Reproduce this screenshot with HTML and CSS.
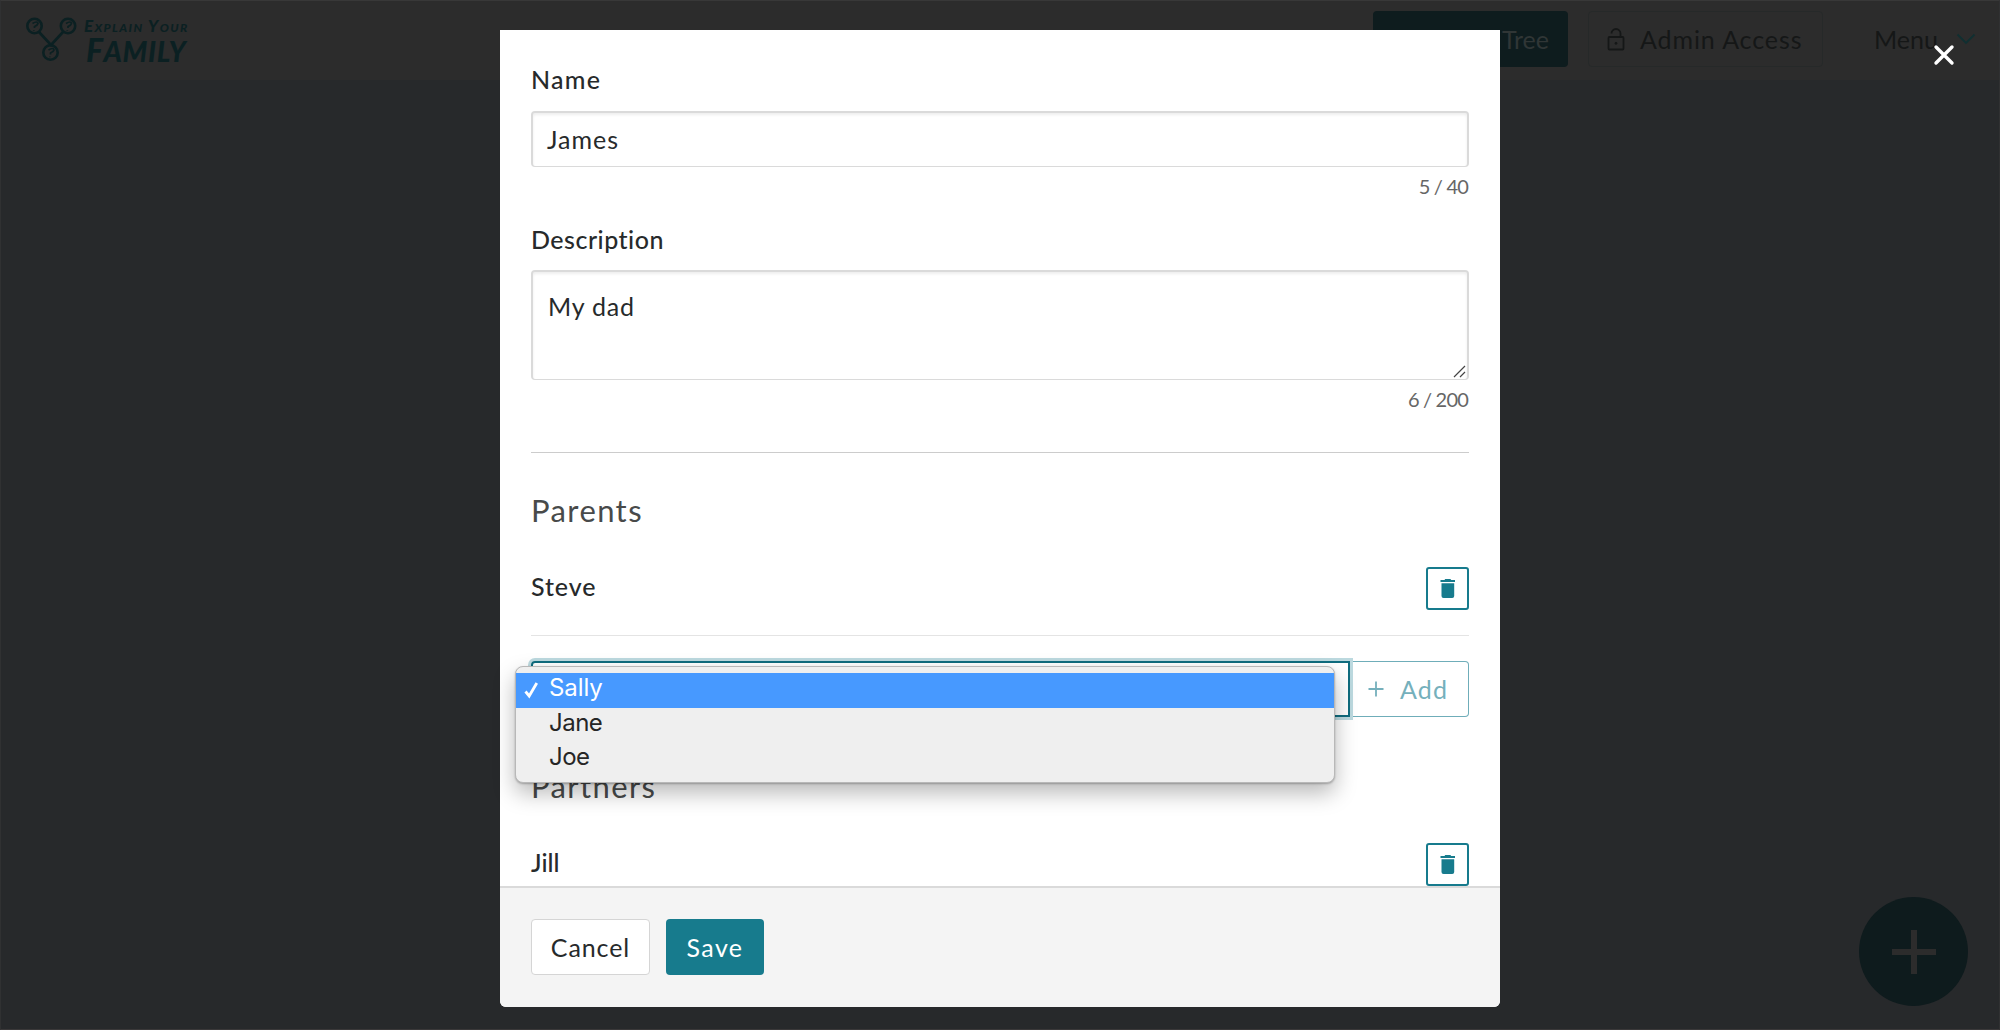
FILE: index.html
```html
<!DOCTYPE html>
<html lang="en">
<head>
<meta charset="utf-8">
<title>Explain Your Family</title>
<link rel="stylesheet" href="styles.css">
</head>
<body>
<div class="page">
  <header class="header">
    <div class="logo">
      <svg class="logo-mark" width="52" height="46" viewBox="0 0 52 46" fill="none" stroke="currentColor" stroke-width="2.6">
        <path d="M13 15 L25 28 L37 15"/>
        <circle cx="8.500" cy="9" r="7.2"/><circle cx="42" cy="9" r="7.2"/><circle cx="24.500" cy="35.500" r="7.2"/>
        <g stroke-width="1.7"><path d="M6.5 6.5q5-3 5.500 0q-.5 2-3.500 3v1.500M7.800 13v.8M40 6.500q5-3 5.500 0q-.5 2-3.500 3v1.500M41.300 13v.8M22.500 33q5-3 5.500 0q-.5 2-3.500 3v1.500M23.800 39.500v.8"/></g>
      </svg>
      <div class="logo-text"><span class="logo-top">Explain Your</span><span class="logo-bottom">Family</span></div>
    </div>
    <nav class="nav">
      <span class="nav-btn nav-tree">Tree</span>
      <span class="nav-btn nav-admin">
        <svg width="18" height="23" viewBox="0 0 18 23" fill="none" stroke="currentColor" stroke-width="1.8"><rect x="1.500" y="9" width="15" height="12.500" rx="1"/><path d="M4.500 5.500a4.500 4.500 0 0 1 9 0V9"/><circle cx="9" cy="15.300" r="1" fill="currentColor" stroke-width="1"/></svg>
        <span>Admin Access</span>
      </span>
      <span class="nav-menu"><span class="menu-word">Menu</span>
        <svg width="20" height="12" viewBox="0 0 20 12" fill="none" stroke="#102f31" stroke-width="1.800"><path d="M1.500 1.500 10 10l8.500-8.500"/></svg>
      </span>
    </nav>
  </header>
  <div class="fab"><svg width="44" height="44" viewBox="0 0 44 44" stroke="#2c2c2c" stroke-width="6"><path d="M22 0v44M0 22h44"/></svg></div>
</div>
<svg class="close" width="22" height="22" viewBox="0 0 22 22" stroke="#fff" stroke-width="3.400" stroke-linecap="round"><path d="M3 3 19 19M19 3 3 19"/></svg>

<main class="modal">
  <div class="modal-body">
    <label class="label label-name">Name</label>
    <div class="input"><span class="t-james">James</span></div>
    <div class="counter">5 / 40</div>
    <label class="label label-desc">Description</label>
    <div class="input textarea"><span class="t-dad">My dad</span>
      <svg class="grip" width="13" height="13" viewBox="0 0 13 13" stroke="#444" stroke-width="1.200"><path d="M1 12 12 1M7 12l5-5"/></svg>
    </div>
    <div class="counter counter-desc">6 / 200</div>
    <hr class="rule">
    <h2 class="heading">Parents</h2>
    <div class="person">
      <span class="person-name">Steve</span>
      <span class="trash"><svg width="16" height="20" viewBox="0 0 16 20" fill="currentColor"><path d="M5.200 0h5.200l.8.900H15v2H.500v-2h4zM1.500 4.200h12.700V17a2 2 0 0 1-2 2H3.500a2 2 0 0 1-2-2z"/></svg></span>
    </div>
    <hr class="rule rule-light">
    <div class="picker">
      <div class="select"></div>
      <div class="add"><svg width="16" height="16" viewBox="0 0 16 16" stroke="currentColor" stroke-width="1.800"><path d="M8 .5v15M.500 8h15"/></svg><span>Add</span></div>
      <div class="menu">
        <div class="option selected"><svg class="check" width="15" height="18" viewBox="0 0 15 18" fill="none" stroke="#fff" stroke-width="2.800"><path d="M1.500 10.500 5.200 15 12.800 2"/></svg>Sally</div>
        <div class="option">Jane</div>
        <div class="option">Joe</div>
      </div>
    </div>
    <h2 class="heading heading-partners">Partners</h2>
    <div class="person">
      <span class="person-name name-jill">Jill</span>
      <span class="trash"><svg width="16" height="20" viewBox="0 0 16 20" fill="currentColor"><path d="M5.200 0h5.200l.8.900H15v2H.500v-2h4zM1.500 4.200h12.700V17a2 2 0 0 1-2 2H3.500a2 2 0 0 1-2-2z"/></svg></span>
    </div>
  </div>
  <footer class="modal-footer">
    <button class="btn btn-cancel">Cancel</button>
    <button class="btn btn-save">Save</button>
  </footer>
</main>
</body>
</html>
```
FILE: styles.css
```css
* { box-sizing: border-box; }
body { margin: 0; font-family: Lato, sans-serif; font-size: 25px; line-height: 30px; color: #272a2b; overflow: hidden; font-variant-ligatures: none; }
svg { flex: none; }
.page { height: 1030px; background: #27292b; border: 1px solid #303132; border-top-color: #383838; border-bottom-color: #3a3839; }
.header { height: 79px; background: #2c2c2c; display: flex; justify-content: space-between; align-items: flex-start; padding: 10px 23px 0 25px; }
.logo { display: flex; color: #0b2022; padding-top: 6px; }
.logo-text { display: flex; flex-direction: column; font-style: italic; font-weight: 900; margin-left: 6px; white-space: nowrap; }
.logo-top { font-size: 17px; line-height: 17px; letter-spacing: 1.4px; font-variant: small-caps; }
.logo-bottom { font-size: 28px; line-height: 31px; letter-spacing: .6px; padding-left: 2px; text-transform: uppercase; }
.logo-bottom::first-letter { font-size: 32px; }
.nav { display: flex; align-items: center; color: #151717; white-space: nowrap; }
.nav-btn { height: 56px; border-radius: 4px; display: flex; align-items: center; flex: none; }
.nav-tree { width: 195px; background: #0e1c1e; color: #303636; justify-content: flex-end; padding-right: 19px; }
.nav-admin { width: 235px; margin-left: 20px; border: 1px solid #262929; padding-left: 18px; gap: 15px; letter-spacing: .9px; }
.nav-menu { display: flex; align-items: center; margin-left: 51px; }
.menu-word { width: 82px; }
.fab { position: fixed; left: 1859px; top: 897px; width: 109px; height: 109px; border-radius: 50%; background: #0e1b1d; display: flex; align-items: center; justify-content: center; }
.close { position: fixed; left: 1933px; top: 44px; }

.modal { position: fixed; left: 500px; top: 30px; width: 1000px; height: 977px; display: flex; flex-direction: column; background: #fff; border-radius: 0 0 6px 6px; }
.modal-body { height: 856px; padding: 34px 31px 0; flex: none; }
.label { display: block; font-weight: 500; letter-spacing: .5px; }
.label-name { letter-spacing: 1.3px; }
.input { height: 56px; margin-top: 17px; border: 2px solid #dadada; border-bottom-width: 1px; border-radius: 4px; box-shadow: inset 0 2px 3px rgba(0,0,0,.07); padding: 11px 14px; }
.t-james { letter-spacing: 1px; }
.counter { margin-top: 7px; padding-right: 1px; text-align: right; font-size: 20px; line-height: 24px; color: #666; letter-spacing: -.8px; }
.label-desc { margin-top: 26px; }
.textarea { position: relative; height: 110px; margin-top: 16px; padding: 19px 15px; }
.t-dad { letter-spacing: .8px; }
.grip { position: absolute; right: 1px; bottom: 1px; }
.counter-desc { margin-top: 7px; }
.rule { margin: 41px 0 0; border: 0; height: 1px; background: #ccc; }
.heading { margin: 38px 0 0; font-size: 31px; line-height: 38px; font-weight: 400; color: #484a4a; letter-spacing: 1.4px; }
.person { display: flex; justify-content: space-between; margin-top: 38px; height: 43px; }
.person-name { font-weight: 500; padding-top: 4px; letter-spacing: .9px; }
.name-jill { letter-spacing: 0; }
.trash { width: 43px; height: 43px; border: 2px solid #177b8d; border-radius: 3px; color: #177b8d; display: flex; align-items: center; justify-content: center; padding-top: 1px; }
.rule-light { margin-top: 25px; background: #e4e4e4; }
.picker { display: flex; position: relative; margin-top: 25px; height: 56px; }
.select { width: 819px; border: 2px solid #0f6c7e; border-radius: 4px 0 0 4px; box-shadow: 0 0 0 3px #bcd9df; z-index: 1; }
.add { width: 119px; border: 1px solid #6fadb9; border-left: 0; border-radius: 0 4px 4px 0; color: #75b0bc; display: flex; align-items: center; gap: 16px; padding-left: 18px; letter-spacing: 1.2px; }
.menu { position: absolute; z-index: 2; left: -16px; top: 5px; width: 820px; height: 117px; background: #efefef; border: 1px solid #b8b8b8; border-radius: 8px; box-shadow: 0 10px 22px rgba(0,0,0,.28), 0 1px 2px rgba(0,0,0,.25); padding-top: 6px; font-family: Inter, sans-serif; font-size: 24px; color: #262626; }
.option { position: relative; height: 34.5px; line-height: 30px; padding-left: 33px; letter-spacing: -.5px; }
.selected { background: #4799ff; color: #fff; letter-spacing: -.1px; }
.check { position: absolute; left: 8px; top: 8px; }
.heading-partners { margin-top: 50px; }
.modal-footer { flex: 1; background: #f4f4f4; border-top: 2px solid #dadada; border-radius: 0 0 6px 6px; padding: 31px; display: flex; gap: 16px; }
.btn { height: 56px; font: inherit; border-radius: 4px; padding: 0; border: 0; }
.btn-cancel { width: 119px; background: #fff; border: 1px solid #d5d5d5; color: #272a2b; letter-spacing: .9px; }
.btn-save { width: 98px; background: #177b8d; color: #fff; letter-spacing: 1.4px; }
```
